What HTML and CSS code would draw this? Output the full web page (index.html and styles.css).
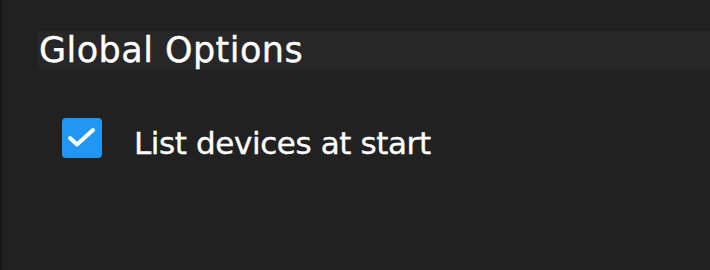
FILE: index.html
```html
<!DOCTYPE html>
<html lang="en">
<head>
    <meta charset="UTF-8">
    <meta name="viewport" content="width=device-width, initial-scale=1.0">
    <title>Global Options</title>
    <link rel="stylesheet" href="styles.css">
</head>
<body>
    <div class="options-panel">
        <h2 class="section-title">Global Options</h2>
        <label class="option-row">
            <span class="checkbox checked">
                <svg width="40" height="40" viewBox="0 0 40 40">
                    <path d="M8 20 L15 26.5 L31 12" fill="none" stroke="#ffffff" stroke-width="4" stroke-linecap="round" stroke-linejoin="round"/>
                </svg>
            </span>
            <span class="option-label">List devices at start</span>
        </label>
    </div>
</body>
</html>
```

FILE: styles.css
```css
html, body {
    height: 100%;
}

body {
    margin: 0;
    background-color: #212121;
    border-left: 2px solid #191919;
    box-sizing: border-box;
    font-family: 'DejaVu Sans', 'Liberation Sans', sans-serif;
    color: #ffffff;
    overflow: hidden;
    -webkit-text-stroke: 0.35px #ffffff;
}

.options-panel {
    padding-top: 31px;
    padding-left: 36px;
}

.section-title {
    margin: 0;
    height: 39px;
    line-height: 39px;
    padding-left: 1px;
    background-color: #272727;
    font-size: 35px;
    font-weight: normal;
    letter-spacing: 0.45px;
    white-space: nowrap;
}

.option-row {
    display: flex;
    align-items: flex-start;
    margin-top: 48px;
    margin-left: 24px;
}

.checkbox {
    width: 40px;
    height: 40px;
    border-radius: 4px;
    background-color: #2196f3;
    flex-shrink: 0;
}

.checkbox svg {
    display: block;
}

.option-label {
    margin-left: 32px;
    margin-top: 5px;
    line-height: 40px;
    font-size: 31px;
    letter-spacing: -0.4px;
    white-space: nowrap;
}
```
